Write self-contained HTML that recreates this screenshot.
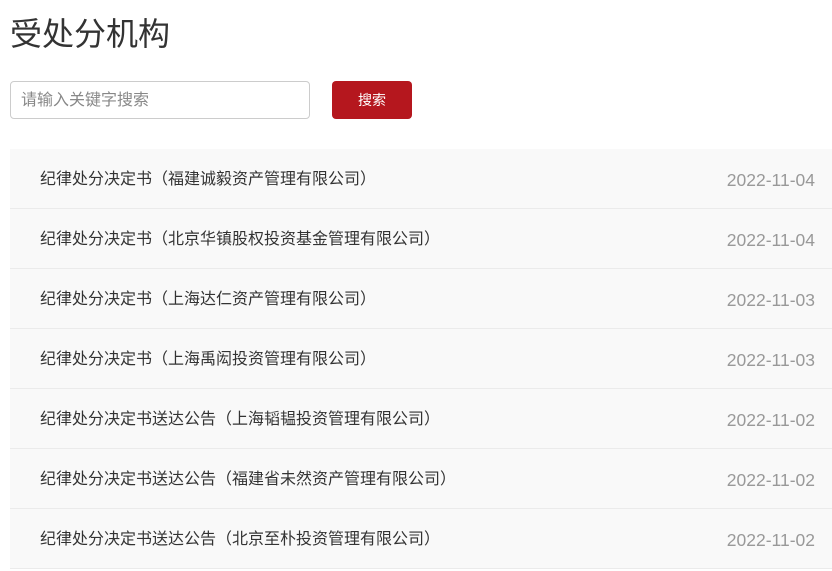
<!DOCTYPE html>
<html><head><meta charset="utf-8"><style>
*{margin:0;padding:0;box-sizing:border-box}
body{width:832px;height:571px;overflow:hidden;background:#fff;font-family:"Liberation Sans","Noto Sans CJK SC",sans-serif;position:relative}
h1{position:absolute;left:10px;top:13px;font-size:32px;font-weight:normal;color:#333;line-height:42px}
.inp{position:absolute;left:10px;top:81px;width:300px;height:38px;border:1px solid #ccc;border-radius:4px;font-size:16px;color:#888;padding-left:10px;line-height:38px}
.btn{position:absolute;left:332px;top:81px;width:80px;height:38px;background:#b5171e;border-radius:4px;color:#fff;font-size:14px;text-align:center;line-height:39px}
.list{position:absolute;left:10px;top:149px;width:822px}
.row{height:60px;background:#f9f9f9;border-bottom:1px solid #ebebeb;position:relative;font-size:16px;line-height:62px}
.row .t{position:absolute;left:30px;color:#333}
.row .d{position:absolute;right:17px;color:#999;font-size:17.5px}
</style></head><body>
<h1>受处分机构</h1>
<div class="inp">请输入关键字搜索</div>
<div class="btn">搜索</div>
<div class="list">
<div class="row"><span class="t">纪律处分决定书（福建诚毅资产管理有限公司）</span><span class="d">2022-11-04</span></div>
<div class="row"><span class="t">纪律处分决定书（北京华镇股权投资基金管理有限公司）</span><span class="d">2022-11-04</span></div>
<div class="row"><span class="t">纪律处分决定书（上海达仁资产管理有限公司）</span><span class="d">2022-11-03</span></div>
<div class="row"><span class="t">纪律处分决定书（上海禹闳投资管理有限公司）</span><span class="d">2022-11-03</span></div>
<div class="row"><span class="t">纪律处分决定书送达公告（上海韬韫投资管理有限公司）</span><span class="d">2022-11-02</span></div>
<div class="row"><span class="t">纪律处分决定书送达公告（福建省未然资产管理有限公司）</span><span class="d">2022-11-02</span></div>
<div class="row"><span class="t">纪律处分决定书送达公告（北京至朴投资管理有限公司）</span><span class="d">2022-11-02</span></div>
</div>
</body></html>
